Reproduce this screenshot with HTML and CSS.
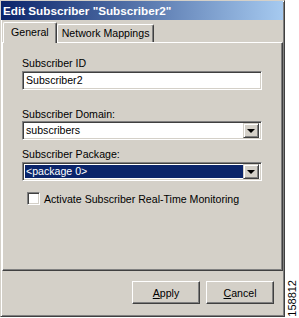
FILE: index.html
```html
<!DOCTYPE html>
<html lang="en">
<head>
  <meta charset="UTF-8">
  <title>Edit Subscriber</title>
  <link rel="stylesheet" href="styles.css">
</head>
<body>
  <div class="page">
    <div class="window">
      <div class="titlebar">Edit Subscriber "Subscriber2"</div>

      <div class="tabs">
        <div class="tab active">General</div>
        <div class="tab">Network Mappings</div>
      </div>

      <div class="panel">
        <label class="field-label first">Subscriber ID</label>
        <div class="textbox">Subscriber2</div>

        <label class="field-label domain">Subscriber Domain:</label>
        <div class="combo">
          <div class="combo-value">subscribers</div>
          <div class="combo-btn"><span class="arrow"></span></div>
        </div>

        <label class="field-label package">Subscriber Package:</label>
        <div class="combo">
          <div class="combo-value selected">&lt;package 0&gt;</div>
          <div class="combo-btn"><span class="arrow"></span></div>
        </div>

        <div class="check-row">
          <span class="checkbox"></span>
          <span>Activate Subscriber Real-Time Monitoring</span>
        </div>
      </div>

      <div class="footer">
        <button class="btn"><u>A</u>pply</button>
        <button class="btn"><u>C</u>ancel</button>
      </div>
    </div>

    <div class="side">
      <span class="fig-id">158812</span>
    </div>
  </div>
</body>
</html>
```

FILE: styles.css
```css
body {
  margin: 0;
  background: #fff;
  font-family: 'Liberation Sans', Arial, sans-serif;
  font-size: 10.6px;
  color: #000;
}

.page {
  display: flex;
  width: 299px;
  height: 318px;
}

.window {
  width: 285px;
  height: 317px;
  box-sizing: border-box;
  background: #d4d0c8;
  border-top: 1px solid #d4d0c8;
  border-left: 1px solid #d4d0c8;
  border-right: 1px solid #404040;
  border-bottom: 1px solid #404040;
  box-shadow: inset 1px 1px 0 #fff, inset -1px -1px 0 #808080;
  display: flex;
  flex-direction: column;
}

.titlebar {
  height: 19px;
  margin: 0 1px 0 0;
  padding-left: 2px;
  line-height: 19px;
  font-weight: bold;
  font-size: 11.7px;
  color: #fff;
  background: linear-gradient(to right, #0a246a, #a6caf0);
  white-space: nowrap;
}

.tabs {
  display: flex;
  align-items: flex-end;
  height: 22px;
  padding-left: 2px;
}

.tab {
  height: 17px;
  line-height: 17px;
  padding: 0 4px;
  border-top: 1px solid #fff;
  border-left: 1px solid #fff;
  border-right: 1px solid #404040;
  box-shadow: inset -1px 0 0 #808080;
  border-radius: 2px 2px 0 0;
}

.tab.active {
  height: 20px;
  line-height: 19px;
  padding: 0 7px;
  position: relative;
  top: 1px;
  background: #d4d0c8;
  z-index: 1;
}

.panel {
  height: 229px;
  margin: 0 1px 0 1px;
  box-sizing: border-box;
  border-top: 1px solid #fff;
  border-left: 1px solid #fff;
  border-right: 1px solid #404040;
  border-bottom: 1px solid #404040;
  box-shadow: inset -1px -1px 0 #808080;
  padding: 0 20px 0 19px;
}

.field-label {
  display: block;
  height: 14px;
  line-height: 14px;
}

.field-label.first { margin-top: 13px; margin-bottom: 1px; }
.field-label.domain { margin-top: 17px; }
.field-label.package { margin-top: 7px; margin-bottom: 1px; }

.textbox,
.combo {
  width: 240px;
  height: 19px;
  box-sizing: border-box;
  background: #fff;
  border-top: 1px solid #808080;
  border-left: 1px solid #808080;
  border-right: 1px solid #fff;
  border-bottom: 1px solid #fff;
  box-shadow: inset 1px 1px 0 #404040, inset -1px -1px 0 #d4d0c8;
}

.textbox {
  padding-left: 3px;
  line-height: 17px;
}

.combo {
  display: flex;
  padding: 2px;
}

.combo-value {
  flex: 1;
  line-height: 13px;
  padding-left: 1px;
}

.combo-value.selected {
  background: #0a246a;
  color: #fff;
}

.combo-btn {
  width: 16px;
  height: 15px;
  margin-top: -1px;
  box-sizing: border-box;
  background: #d4d0c8;
  border-top: 1px solid #d4d0c8;
  border-left: 1px solid #d4d0c8;
  border-right: 1px solid #404040;
  border-bottom: 1px solid #404040;
  box-shadow: inset 1px 1px 0 #fff, inset -1px -1px 0 #808080;
  display: flex;
  align-items: center;
  justify-content: center;
}

.arrow {
  width: 0;
  height: 0;
  border-left: 4px solid transparent;
  border-right: 4px solid transparent;
  border-top: 4px solid #000;
}

.check-row {
  display: flex;
  align-items: center;
  gap: 4px;
  margin-top: 11px;
  padding-left: 5px;
  height: 13px;
}

.checkbox {
  width: 13px;
  height: 13px;
  box-sizing: border-box;
  background: #fff;
  border-top: 1px solid #808080;
  border-left: 1px solid #808080;
  border-right: 1px solid #fff;
  border-bottom: 1px solid #fff;
  box-shadow: inset 1px 1px 0 #404040, inset -1px -1px 0 #d4d0c8;
}

.footer {
  display: flex;
  justify-content: flex-end;
  gap: 6px;
  padding: 10px 10px 0 0;
}

.btn {
  width: 68px;
  height: 23px;
  box-sizing: border-box;
  background: #d4d0c8;
  font-family: 'Liberation Sans', Arial, sans-serif;
  font-size: 10.6px;
  color: #000;
  border-top: 1px solid #fff;
  border-left: 1px solid #fff;
  border-right: 1px solid #404040;
  border-bottom: 1px solid #404040;
  box-shadow: inset -1px -1px 0 #808080;
  padding: 0;
}

.side {
  flex: 1;
  display: flex;
  align-items: flex-end;
  justify-content: center;
  padding-bottom: 1px;
}

.fig-id {
  writing-mode: vertical-rl;
  transform: rotate(180deg);
  font-size: 11px;
  line-height: 11px;
}
```
